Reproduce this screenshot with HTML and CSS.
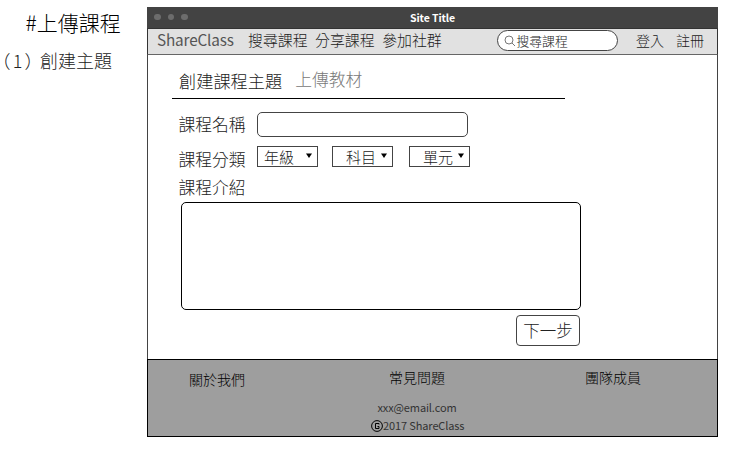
FILE: index.html
```html
<!DOCTYPE html>
<html lang="zh-Hant">
<head>
<meta charset="utf-8">
<title>ShareClass</title>
<link rel="stylesheet" href="styles.css">
</head>
<body>
<div class="page">
  <aside class="notes">
    <h1>#上傳課程</h1>
    <p><span class="step">（1）</span><span>創建主題</span></p>
  </aside>
  <main class="window">
    <div class="titlebar">
      <div class="dots"><i></i><i></i><i></i></div>
      <span class="site-title">Site Title</span>
    </div>
    <nav class="nav">
      <span class="brand">ShareClass</span>
      <div class="links"><span>搜尋課程</span><span>分享課程</span><span>參加社群</span></div>
      <div class="search">
        <svg width="12" height="12" viewBox="0 0 12 12"><circle cx="5" cy="5" r="4"/><path d="M8 8l3 3"/></svg>
        <span>搜尋課程</span>
      </div>
      <div class="account"><span>登入</span><span>註冊</span></div>
    </nav>
    <section class="content">
      <div class="tabs"><span class="tab active">創建課程主題</span><span class="tab">上傳教材</span></div>
      <div class="row name-row"><span class="label">課程名稱</span><div class="input"></div></div>
      <div class="row type-row">
        <span class="label">課程分類</span>
        <div class="select grade"><span>年級</span><svg width="8" height="6" viewBox="0 0 8 6"><path d="M1 .5h6L4 5z"/></svg></div>
        <div class="select subject"><span>科目</span><svg width="8" height="6" viewBox="0 0 8 6"><path d="M1 .5h6L4 5z"/></svg></div>
        <div class="select unit"><span>單元</span><svg width="8" height="6" viewBox="0 0 8 6"><path d="M1 .5h6L4 5z"/></svg></div>
      </div>
      <div class="row intro-row"><span class="label">課程介紹</span></div>
      <div class="textarea"></div>
      <div class="next">下一步</div>
    </section>
    <footer class="footer">
      <div class="footer-links"><span class="about">關於我們</span><span class="faq">常見問題</span><span class="team">團隊成員</span></div>
      <div class="email">xxx@email.com</div>
      <div class="copyright"><svg width="12" height="12" viewBox="0 0 12 12"><circle cx="6" cy="6" r="5.4"/><path d="M8 4.500V3.500H4.500V8.500H8V6.500H6.500"/></svg><span>2017 ShareClass</span></div>
    </footer>
  </main>
</div>
</body>
</html>
```
FILE: styles.css
```css
* { box-sizing: border-box; }
body {
  margin: 0;
  background: #fff;
  color: #222;
  font-family: "Noto Sans CJK TC", sans-serif;
  font-weight: 300;
  overflow: hidden;
}
span { white-space: nowrap; }
svg { flex: none; }
.page { display: flex; height: 457px; padding-top: 7px; }
.notes { width: 147px; flex: none; white-space: nowrap; }
.notes h1 {
  margin: -2px 0 0 25.500px;
  font-size: 21px;
  line-height: 34px;
  font-weight: 300;
  color: #000;
}
.notes p { display: flex; margin: 6px 0 0; font-size: 18px; line-height: 30px; }
.step { width: 40px; padding-left: 1.500px; font-feature-settings: "halt"; letter-spacing: 2.200px; }

.window { width: 571px; height: 430px; display: flex; flex-direction: column; }
.titlebar {
  height: 21px;
  background: #434343;
  display: grid;
  grid-template-columns: 1fr auto 1fr;
  align-items: center;
}
.dots { display: flex; gap: 7px; padding-left: 7px; margin-top: -1px; }
.dots i { width: 6.500px; height: 6.500px; border-radius: 50%; background: #6c6c6c; }
.site-title { color: #fff; font-size: 10.500px; line-height: 20px; font-weight: 700; letter-spacing: -.1px; }

.nav {
  height: 27px;
  border: 1px solid #333;
  border-bottom-color: #666;
  background: #e1e1e1;
  display: flex;
  align-items: center;
  padding-left: 9px;
}
.brand { width: 91px; font-size: 15.300px; letter-spacing: -.15px; line-height: 24px; margin-top: -5px; font-weight: 400; color: #555; }
.links { display: flex; gap: 7.500px; width: 249px; font-size: 14.900px; line-height: 24px; margin-top: -3px; }
.search {
  width: 121px;
  height: 21px;
  margin-top: -2px;
  border: 1px solid #444;
  border-radius: 11px;
  background: #fff;
  display: flex;
  align-items: center;
  padding-left: 6px;
  font-size: 12.800px;
  line-height: 19px;
}
.search svg { fill: none; stroke: #777; }
.search span { margin: -1px 0 0 .5px; }
.account { display: flex; gap: 12px; margin: -4px 0 0 18px; font-size: 14px; line-height: 24px; }

.content {
  height: 304px;
  border: solid #434343;
  border-width: 0 1px;
  padding-left: 24px;
}
.tabs {
  width: 393px;
  height: 44px;
  border-bottom: 1px solid #000;
  display: flex;
  gap: 13px;
  padding: 13px 0 0 7px;
  font-size: 17px;
  line-height: 25px;
}
.tab { color: #777; font-size: 16.800px; margin-top: -1px; }
.active { color: #222; margin-top: 0; font-size: 17.200px; }
.row { display: flex; align-items: center; padding-left: 6.500px; }
.label { width: 78.500px; font-size: 16.800px; line-height: 24px; }
.name-row { height: 26px; margin-top: 13px; }
.name-row .label { margin-top: -2px; }
.input { width: 211px; height: 25px; margin-top: -1px; border: 1px solid #444; border-radius: 5px; }
.type-row { height: 21px; margin-top: 8px; }
.type-row .label { margin-top: 5px; }
.select {
  width: 61px;
  height: 21px;
  border: 1px solid #444;
  display: flex;
  align-items: center;
  justify-content: space-between;
  font-size: 15px;
  line-height: 19px;
  padding: 0 4px 0 6px;
}
.select svg { margin-bottom: 2px; fill: #000; }
.subject { margin-left: 14px; padding-left: 13px; }
.unit { margin-left: 16px; padding-left: 13px; }
.intro-row { height: 24px; margin-top: 8px; }
.intro-row .label { margin-top: -1px; }
.textarea {
  width: 400px;
  height: 108px;
  margin: 3px 0 0 9px;
  border: 1px solid #000;
  border-radius: 5px;
}
.next {
  width: 64px;
  height: 31px;
  margin: 5px 0 0 344px;
  border: 1px solid #444;
  border-radius: 4px;
  font-size: 16.500px;
  line-height: 29px;
  text-align: center;
}

.footer { height: 78px; border: 1px solid #000; background: #9e9e9e; color: #000; }
.footer-links { display: flex; padding: 7px 0 0 41px; font-size: 14px; line-height: 20px; height: 38px; }
.about { width: 200px; margin-top: 2px; }
.faq { width: 196px; }
.email { text-align: center; font-size: 11px; letter-spacing: -.12px; font-weight: 400; line-height: 18px; margin: 0 31px 0 0; color: #333; }
.copyright { display: flex; padding-left: 223px; font-size: 11px; letter-spacing: -.12px; font-weight: 400; line-height: 18px; align-items: center; color: #333; }
.copyright svg { margin-top: 1px; fill: none; stroke: #000; }
```
